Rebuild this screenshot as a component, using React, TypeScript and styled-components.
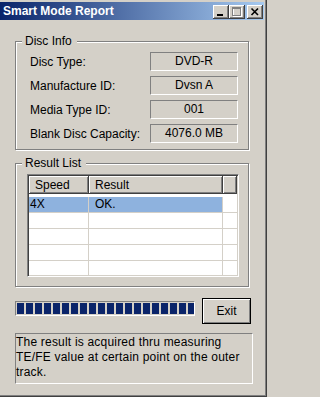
import React from "react";
import styled, { createGlobalStyle } from "styled-components";

const GlobalStyle = createGlobalStyle`
  html, body {
    margin: 0;
    padding: 0;
    background: #d4d0c8;
  }
  body {
    font-family: "Liberation Sans", Arial, sans-serif;
    font-size: 12px;
    color: #000;
  }
  * {
    box-sizing: border-box;
  }
`;

const Window = styled.div`
  width: 267px;
  height: 397px;
  background: #d4d0c8;
  padding: 2px 2px 0 0;
  border-right: 1px solid #404040;
  border-bottom: 1px solid #404040;
  box-shadow: inset -1px -1px 0 #808080;
  display: flex;
  flex-direction: column;
  overflow: hidden;
`;

//タイトルバー
const TitleBar = styled.div`
  height: 18px;
  display: flex;
  align-items: flex-start;
  padding: 0 1px 0 3px;
  background: linear-gradient(to right, #0a246a, #a6caf0);
  color: #fff;
  font-weight: bold;
  font-size: 12px;
  line-height: 18px;
`;

const TitleText = styled.span`
  flex: 1;
  white-space: nowrap;
`;

const CaptionButtons = styled.div`
  display: flex;
  margin-top: 3px;
  gap: 2px;
`;

const ButtonPair = styled.div`
  display: flex;
`;

const CaptionButton = styled.button`
  width: 16px;
  height: 14px;
  padding: 0;
  border: none;
  background: #d4d0c8;
  box-shadow: inset -1px -1px 0 #404040, inset 1px 1px 0 #fff,
    inset -2px -2px 0 #808080;
  display: block;
  svg {
    display: block;
  }
`;

const Body = styled.div`
  display: flex;
  flex-direction: column;
  padding-left: 15px;
`;

//グループボックス
const GroupBox = styled.div<{ $top: number }>`
  width: 234px;
  margin-top: ${(p) => p.$top}px;
  border: 1px solid #808080;
  box-shadow: 1px 1px 0 #fff, inset 1px 1px 0 #fff;
`;

const GroupCaption = styled.div`
  width: fit-content;
  height: 14px;
  margin: -8px 0 0 6px;
  padding: 0 5px 0 3px;
  background: #d4d0c8;
  line-height: 14px;
`;

const InfoGrid = styled.div`
  display: grid;
  grid-template-columns: 120px 88px;
  row-gap: 5px;
  align-items: center;
  padding: 4px 0 6px 14px;
`;

const InfoLabel = styled.span`
  line-height: 14px;
  white-space: nowrap;
`;

const InfoValue = styled.div`
  height: 19px;
  border: 1px solid;
  border-color: #808080 #fff #fff #808080;
  text-align: center;
  line-height: 17px;
`;

//リスト
const ListBox = styled.div`
  width: 212px;
  height: 103px;
  margin: 4px 0 9px 11px;
  border: 1px solid;
  border-color: #808080 #fff #fff #808080;
  padding: 1px;
  box-shadow: inset 1px 1px 0 #404040, inset -1px -1px 0 #d4d0c8;
  background: #fff;
  overflow: hidden;
`;

const ListInner = styled.div`
  background: #fff;
  height: 100%;
  overflow: hidden;
`;

const HeaderRow = styled.div`
  display: grid;
  grid-template-columns: 60px 134px 1fr;
  height: 18px;
`;

const HeaderCell = styled.div`
  background: #d4d0c8;
  box-shadow: inset -1px -1px 0 #404040, inset 1px 1px 0 #fff,
    inset -2px -2px 0 #808080;
  padding-left: 6px;
  line-height: 18px;
  white-space: nowrap;
`;

const ListBody = styled.div`
  padding-top: 3px;
`;

const Row = styled.div`
  display: grid;
  grid-template-columns: 60px 134px 1fr;
  height: 16px;
  border-bottom: 1px solid #d4d0c8;
`;

const Cell = styled.div<{ $pad: number; $selected?: boolean }>`
  padding-left: ${(p) => p.$pad}px;
  line-height: 15px;
  border-right: 1px solid #d4d0c8;
  background: ${(p) => (p.$selected ? "#8eb2de" : "#fff")};
  white-space: nowrap;
  &:last-child {
    border-right: none;
    background: #fff;
  }
`;

//下部
const Footer = styled.div`
  display: flex;
  align-items: flex-start;
  margin-top: 11px;
`;

const Progress = styled.div`
  width: 180px;
  height: 15px;
  margin-top: 3px;
  border: 1px solid;
  border-color: #808080 #fff #fff #808080;
  padding: 1px;
  display: flex;
  gap: 2px;
  overflow: hidden;
`;

const Block = styled.div`
  flex: 0 0 7px;
  background: #0a246a;
`;

const ExitButton = styled.button`
  width: 49px;
  height: 26px;
  margin-left: 7px;
  padding: 0;
  border: 1px solid #000;
  background: #d4d0c8;
  box-shadow: inset 1px 1px 0 #fff, inset -1px -1px 0 #808080;
  font-family: "Liberation Sans", Arial, sans-serif;
  font-size: 12px;
  color: #000;
`;

const Note = styled.div`
  width: 238px;
  height: 51px;
  margin-top: 9px;
  border: 1px solid;
  border-color: #808080 #fff #fff #808080;
  padding: 1px 0 0 0;
  line-height: 15px;
  letter-spacing: 0.2px;
  white-space: nowrap;
`;

const info = [
  { label: "Disc Type:", value: "DVD-R" },
  { label: "Manufacture ID:", value: "Dvsn A" },
  { label: "Media Type ID:", value: "001" },
  { label: "Blank Disc Capacity:", value: "4076.0 MB" },
];

const results = [
  { speed: "4X", result: "OK.", selected: true },
  { speed: "", result: "" },
  { speed: "", result: "" },
  { speed: "", result: "" },
  { speed: "", result: "" },
  { speed: "", result: "" },
];

export default function App() {
  return (
    <>
      <GlobalStyle />
      <Window>
        <TitleBar>
          <TitleText>Smart Mode Report</TitleText>
          <CaptionButtons>
            <ButtonPair>
              <CaptionButton>
                <svg width="16" height="14" viewBox="0 0 16 14">
                  <rect x="4" y="9" width="6" height="2" fill="#000" />
                </svg>
              </CaptionButton>
              <CaptionButton>
                <svg width="16" height="14" viewBox="0 0 16 14">
                  <rect x="4.5" y="3.5" width="8" height="8" fill="none" stroke="#fff" />
                  <rect x="3.5" y="2.5" width="8" height="8" fill="none" stroke="#808080" />
                  <rect x="3" y="3" width="9" height="1" fill="#808080" />
                </svg>
              </CaptionButton>
            </ButtonPair>
            <CaptionButton>
              <svg width="16" height="14" viewBox="0 0 16 14">
                <path
                  d="M4.5 3.5 L11 10 M11 3.5 L4.5 10"
                  stroke="#000"
                  strokeWidth="1.6"
                />
              </svg>
            </CaptionButton>
          </CaptionButtons>
        </TitleBar>
        <Body>
          <GroupBox $top={21}>
            <GroupCaption>Disc Info</GroupCaption>
            <InfoGrid>
              {info.map((item) => (
                <React.Fragment key={item.label}>
                  <InfoLabel>{item.label}</InfoLabel>
                  <InfoValue>{item.value}</InfoValue>
                </React.Fragment>
              ))}
            </InfoGrid>
          </GroupBox>
          <GroupBox $top={13}>
            <GroupCaption>Result List</GroupCaption>
            <ListBox>
              <ListInner>
                <HeaderRow>
                  <HeaderCell>Speed</HeaderCell>
                  <HeaderCell>Result</HeaderCell>
                  <HeaderCell></HeaderCell>
                </HeaderRow>
                <ListBody>
                  {results.map((r, i) => (
                    <Row key={i}>
                      <Cell $pad={1} $selected={r.selected}>
                        {r.speed}
                      </Cell>
                      <Cell $pad={6} $selected={r.selected}>
                        {r.result}
                      </Cell>
                      <Cell $pad={0}></Cell>
                    </Row>
                  ))}
                </ListBody>
              </ListInner>
            </ListBox>
          </GroupBox>
          <Footer>
            <Progress>
              {Array.from({ length: 20 }).map((_, i) => (
                <Block key={i} />
              ))}
            </Progress>
            <ExitButton>Exit</ExitButton>
          </Footer>
          <Note>
            The result is acquired thru measuring
            <br />
            TE/FE value at certain point on the outer
            <br />
            track.
          </Note>
        </Body>
      </Window>
    </>
  );
}
